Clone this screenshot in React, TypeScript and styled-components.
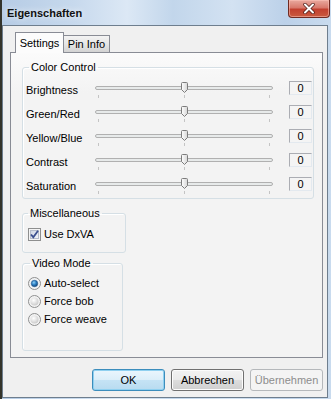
import styled, { createGlobalStyle } from "styled-components";

const Global = createGlobalStyle`
  html, body {
    margin: 0;
    padding: 0;
    width: 331px;
    height: 399px;
    overflow: hidden;
    background: #cfdff0;
  }
  body {
    font-family: "Liberation Sans", Arial, sans-serif;
    font-size: 11px;
    color: #000;
  }
`;

const Window = styled.div`
  width: 331px;
  height: 399px;
  box-sizing: border-box;
  display: flex;
  flex-direction: column;
  border-left: 2px solid #34342b;
  background: linear-gradient(
    to right,
    #b6cce5 0%,
    #c7d9ed 22%,
    #dce8f5 38%,
    #c2d6eb 52%,
    #d3e2f2 70%,
    #bcd1e9 86%,
    #c9dbee 100%
  );
`;

const TitleBar = styled.div`
  height: 25px;
  flex: none;
  display: flex;
  align-items: flex-start;
  justify-content: space-between;
  padding-left: 5px;
`;

const Title = styled.span`
  font-weight: bold;
  font-size: 11px;
  line-height: 26px;
  color: #111;
  text-shadow: 0 0 6px rgba(255, 255, 255, 0.9);
`;

const CloseButton = styled.div`
  width: 42px;
  height: 18px;
  margin-right: 1px;
  box-sizing: border-box;
  border: 1px solid #6f2a22;
  border-top: none;
  border-radius: 0 0 4px 4px;
  background: linear-gradient(to bottom, #e9aa9f 0%, #d8796c 45%, #c2402f 55%, #c95a3f 100%);
  display: flex;
  align-items: center;
  justify-content: center;
  box-shadow: inset 0 0 0 1px rgba(255, 200, 190, 0.5);
`;

const Client = styled.div`
  flex: 1;
  margin: 0 3px 1px 0;
  border: 1px solid #6e7e8e;
  background: #f0f0f0;
  padding: 6px 4px 6px 7px;
  display: flex;
  flex-direction: column;
`;

const TabStrip = styled.div`
  height: 20px;
  display: flex;
  align-items: flex-end;
  padding-left: 5px;
`;

const Tab = styled.div<{ $active?: boolean }>`
  box-sizing: border-box;
  border: 1px solid #898c95;
  border-bottom: none;
  display: flex;
  align-items: center;
  justify-content: center;
  position: relative;
  z-index: ${(p) => (p.$active ? 2 : 1)};
  width: ${(p) => (p.$active ? "49px" : "46px")};
  height: ${(p) => (p.$active ? "21px" : "17px")};
  margin-bottom: ${(p) => (p.$active ? "-1px" : "0")};
  border-left: ${(p) => (p.$active ? "1px solid #898c95" : "none")};
  background: ${(p) =>
    p.$active ? "#fcfcfc" : "linear-gradient(to bottom, #f3f3f3 0%, #e6e6e6 50%, #d3d3d3 100%)"};
  padding-bottom: ${(p) => (p.$active ? "1px" : "0")};
`;

const Panel = styled.div`
  height: 306px;
  box-sizing: border-box;
  border: 1px solid #898c95;
  background: linear-gradient(to bottom, #fbfbfb 0px, #f3f3f3 40px);
  padding: 8px 8px 0 11px;
  display: flex;
  flex-direction: column;
  align-items: flex-start;
`;

const GroupBox = styled.fieldset<{ $width: number }>`
  margin: 0;
  width: ${(p) => p.$width}px;
  box-sizing: border-box;
  border: 1px solid #d5dfe5;
  border-radius: 3px;
  box-shadow: inset 1px 1px 0 #fff;
  min-inline-size: 0;
`;

const Legend = styled.legend<{ $shift: number }>`
  padding: 0 2px;
  margin-left: ${(p) => p.$shift}px;
  line-height: 13px;
  height: 13px;
`;

const ColorGroup = styled(GroupBox)`
  padding: 3px 0 1px 3px;
`;

const MiscGroup = styled(GroupBox)`
  margin-top: 8px;
  padding: 6px 0 10px 5px;
`;

const VideoGroup = styled(GroupBox)`
  margin-top: 4px;
  padding: 4px 0 22px 5px;
`;

const SliderRow = styled.div`
  display: grid;
  grid-template-columns: 69px 178px 23px;
  height: 24px;
  align-items: start;
`;

const RowLabel = styled.span`
  padding-top: 7px;
  line-height: 13px;
  white-space: nowrap;
`;

const SliderBox = styled.div`
  position: relative;
  height: 24px;
`;

const Track = styled.div`
  margin-top: 9px;
  height: 4px;
  box-sizing: border-box;
  border: 1px solid #b0b0b0;
  border-radius: 2px;
  background: #e7eaea;
`;

const Ticks = styled.div`
  margin-top: 5px;
  display: flex;
  justify-content: space-between;
  padding: 0 3px;
`;

const Tick = styled.i`
  width: 1px;
  height: 3px;
  background: #c4c4c4;
`;

const Thumb = styled.svg`
  position: absolute;
  left: 86px;
  top: 5px;
`;

const ValueBox = styled.div`
  margin-left: 16px;
  margin-top: 4px;
  height: 14px;
  width: 23px;
  box-sizing: border-box;
  border: 1px solid #abadb3;
  border-right-color: #e3e9ef;
  border-bottom-color: #e3e9ef;
  background: #f4f4f4;
  text-align: center;
  line-height: 12px;
`;

const OptionRow = styled.label<{ $h: number }>`
  display: flex;
  align-items: center;
  gap: 3px;
  height: ${(p) => p.$h}px;
  line-height: 13px;
  white-space: nowrap;
`;

const ButtonRow = styled.div`
  margin-top: 11px;
  display: flex;
  justify-content: flex-end;
  gap: 6px;
`;

const Button = styled.div<{ $default?: boolean; $disabled?: boolean }>`
  width: 73px;
  height: 22px;
  box-sizing: border-box;
  border-radius: 3px;
  display: flex;
  align-items: center;
  justify-content: center;
  border: 1px solid ${(p) => (p.$default ? "#3c8dbc" : p.$disabled ? "#b5b8bb" : "#707070")};
  color: ${(p) => (p.$disabled ? "#8d8d8d" : "#000")};
  background: ${(p) =>
    p.$disabled
      ? "#f4f4f4"
      : p.$default
      ? "linear-gradient(to bottom, #eaf6fd 0%, #dbeef9 50%, #c5e3f5 51%, #b8dbf0 100%)"
      : "linear-gradient(to bottom, #f2f2f2 0%, #ebebeb 50%, #dddddd 51%, #cfcfcf 100%)"};
  box-shadow: ${(p) =>
    p.$default ? "inset 0 0 0 1px #8fd0f0" : p.$disabled ? "none" : "inset 0 0 0 1px #fcfcfc"};
`;

function ThumbIcon() {
  return (
    <Thumb width="7" height="11" viewBox="0 0 7 11">
      <defs>
        <linearGradient id="tg" x1="0" y1="0" x2="1" y2="0">
          <stop offset="0" stopColor="#ffffff" />
          <stop offset="1" stopColor="#d6d6d6" />
        </linearGradient>
      </defs>
      <path
        d="M0.5 1.5 Q0.5 0.5 1.5 0.5 H5.5 Q6.5 0.5 6.5 1.5 V7.5 L3.5 10.5 L0.5 7.5 Z"
        fill="url(#tg)"
        stroke="#7c7c7c"
        strokeWidth="1"
      />
    </Thumb>
  );
}

function Slider() {
  return (
    <SliderBox>
      <Track />
      <Ticks>
        <Tick />
        <Tick />
        <Tick />
      </Ticks>
      <ThumbIcon />
    </SliderBox>
  );
}

function CheckBox() {
  return (
    <svg width="13" height="13" viewBox="0 0 13 13">
      <defs>
        <linearGradient id="cb" x1="0" y1="0" x2="1" y2="1">
          <stop offset="0" stopColor="#cbd3e2" />
          <stop offset="1" stopColor="#f4f6fa" />
        </linearGradient>
      </defs>
      <rect x="0.5" y="0.5" width="12" height="12" fill="#f4f4f4" stroke="#8e8f8f" />
      <rect x="2.5" y="2.5" width="8" height="8" fill="url(#cb)" stroke="#b5bccb" />
      <path d="M3 6.5 L5.3 9.2 L10 2.8" fill="none" stroke="#3b4f8f" strokeWidth="1.8" />
    </svg>
  );
}

function Radio({ on }: { on?: boolean }) {
  return (
    <svg width="13" height="13" viewBox="0 0 13 13">
      <defs>
        <radialGradient id="rg" cx="0.4" cy="0.35" r="0.7">
          <stop offset="0" stopColor="#ffffff" />
          <stop offset="1" stopColor="#c9c9c9" />
        </radialGradient>
        <radialGradient id="rb" cx="0.4" cy="0.35" r="0.7">
          <stop offset="0" stopColor="#8fd0f5" />
          <stop offset="0.5" stopColor="#2a7fc4" />
          <stop offset="1" stopColor="#123e6e" />
        </radialGradient>
      </defs>
      <circle cx="6.5" cy="6.5" r="6" fill="#f3f3f3" stroke="#8e8f8f" />
      <circle cx="6.5" cy="6.5" r="4" fill={on ? "#dfe9f2" : "url(#rg)"} />
      {on && <circle cx="6.5" cy="6.5" r="3.2" fill="url(#rb)" stroke="#23558a" strokeWidth="0.6" />}
    </svg>
  );
}

const sliders = ["Brightness", "Green/Red", "Yellow/Blue", "Contrast", "Saturation"];

export default function App() {
  return (
    <>
      <Global />
      <Window>
        <TitleBar>
          <Title>Eigenschaften</Title>
          <CloseButton>
            <svg width="14" height="11" viewBox="0 0 14 11">
              <path d="M3 1.5 L11 9.5 M11 1.5 L3 9.5" stroke="#4a1a14" strokeWidth="3.4" strokeLinecap="round" />
              <path d="M3 1.5 L11 9.5 M11 1.5 L3 9.5" stroke="#ffffff" strokeWidth="2" strokeLinecap="round" />
            </svg>
          </CloseButton>
        </TitleBar>
        <Client>
          <TabStrip>
            <Tab $active>Settings</Tab>
            <Tab>Pin Info</Tab>
          </TabStrip>
          <Panel>
            <ColorGroup $width={292}>
              <Legend $shift={3}>Color Control</Legend>
              {sliders.map((name) => (
                <SliderRow key={name}>
                  <RowLabel>{name}</RowLabel>
                  <Slider />
                  <ValueBox>0</ValueBox>
                </SliderRow>
              ))}
            </ColorGroup>
            <MiscGroup $width={104}>
              <Legend $shift={0}>Miscellaneous</Legend>
              <OptionRow $h={16}>
                <CheckBox />
                Use DxVA
              </OptionRow>
            </MiscGroup>
            <VideoGroup $width={101}>
              <Legend $shift={2}>Video Mode</Legend>
              <OptionRow $h={18}>
                <Radio on />
                Auto-select
              </OptionRow>
              <OptionRow $h={18}>
                <Radio />
                Force bob
              </OptionRow>
              <OptionRow $h={18}>
                <Radio />
                Force weave
              </OptionRow>
            </VideoGroup>
          </Panel>
          <ButtonRow>
            <Button $default>OK</Button>
            <Button>Abbrechen</Button>
            <Button $disabled>Übernehmen</Button>
          </ButtonRow>
        </Client>
      </Window>
    </>
  );
}
